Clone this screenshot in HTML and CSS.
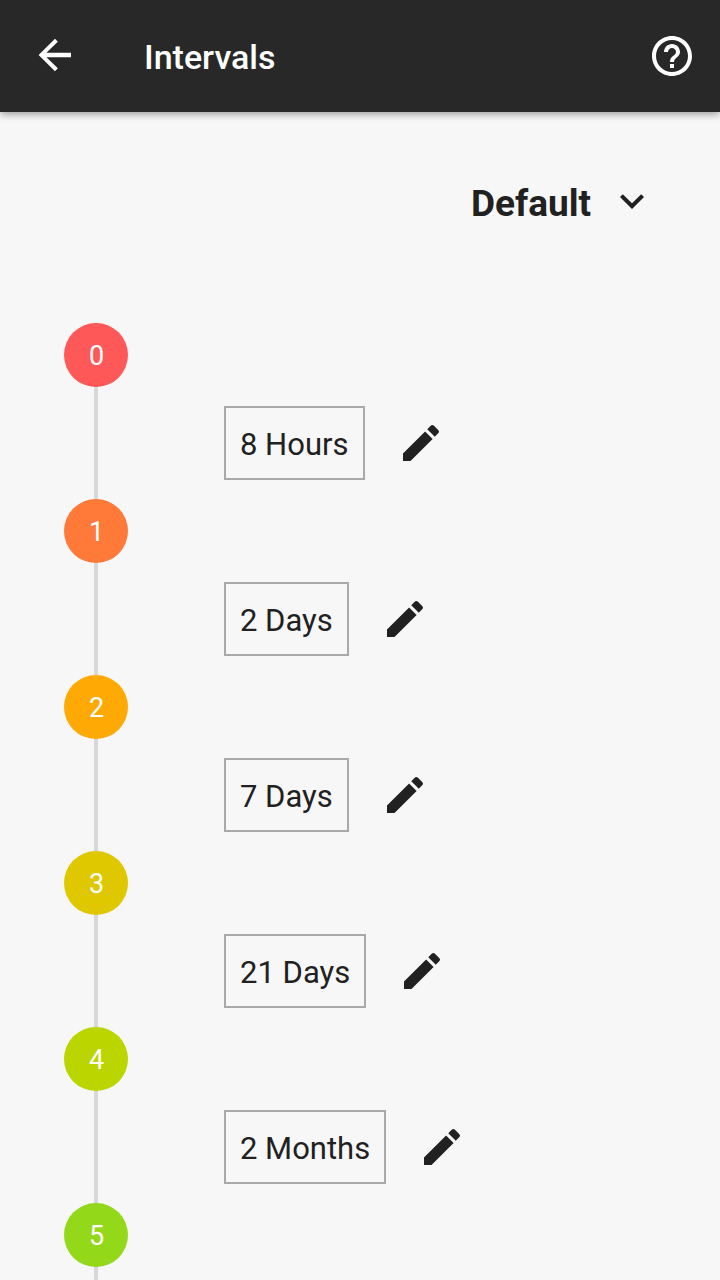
FILE: index.html
```html
<!DOCTYPE html>
<html lang="en">
<head>
<meta charset="utf-8">
<title>Intervals</title>
<link rel="stylesheet" href="styles.css">
</head>
<body>
<svg class="defs" width="0" height="0">
  <symbol id="edit" viewBox="0 0 24 24"><path d="M3 17.25V21h3.75L17.81 9.94l-3.75-3.75L3 17.25zM20.71 7.04a1 1 0 0 0 0-1.41l-2.34-2.34a1 1 0 0 0-1.41 0l-1.83 1.83 3.75 3.75 1.83-1.83z"/></symbol>
</svg>
<header class="bar">
  <svg class="icon back" viewBox="0 0 24 24"><path d="M20 10.9H7.700l5.720-5.490L12 3.900 3.800 12l8.200 8.100 1.420-1.510L7.700 13.100H20v-2.200z"/></svg>
  <h1 class="title">Intervals</h1>
  <svg class="icon" viewBox="0 0 24 24"><path d="M11 18h2v-2h-2v2zm1-16C6.48 2 2 6.48 2 12s4.480 10 10 10 10-4.480 10-10S17.520 2 12 2zm0 18c-4.410 0-8-3.590-8-8s3.590-8 8-8 8 3.590 8 8-3.590 8-8 8zm0-14c-2.210 0-4 1.790-4 4h2c0-1.100.9-2 2-2s2 .9 2 2c0 2-3 1.750-3 5h2c0-2.250 3-2.500 3-5 0-2.210-1.790-4-4-4z"/></svg>
</header>
<main>
  <div class="profile">
    <span class="profile-name">Default</span>
    <svg class="icon" viewBox="0 0 24 24"><path d="M7.41 8.59L12 13.170l4.590-4.580L18 10l-6 6-6-6 1.410-1.410z"/></svg>
  </div>
  <div class="timeline">
    <section class="step"><div class="rail"><span class="dot c0">0</span></div><div class="entry"><span class="value">8 Hours</span><svg class="icon"><use href="#edit"/></svg></div></section>
    <section class="step"><div class="rail"><span class="dot c1">1</span></div><div class="entry"><span class="value">2 Days</span><svg class="icon"><use href="#edit"/></svg></div></section>
    <section class="step"><div class="rail"><span class="dot c2">2</span></div><div class="entry"><span class="value">7 Days</span><svg class="icon"><use href="#edit"/></svg></div></section>
    <section class="step"><div class="rail"><span class="dot c3">3</span></div><div class="entry"><span class="value">21 Days</span><svg class="icon"><use href="#edit"/></svg></div></section>
    <section class="step"><div class="rail"><span class="dot c4">4</span></div><div class="entry"><span class="value">2 Months</span><svg class="icon"><use href="#edit"/></svg></div></section>
    <section class="step"><div class="rail"><span class="dot c5">5</span></div></section>
  </div>
</main>
</body>
</html>
```

FILE: styles.css
```css
* { box-sizing: border-box; }
body {
  margin: 0;
  height: 1280px;
  overflow: hidden;
  background: #f7f7f7;
  color: #212121;
  font-family: Roboto, sans-serif;
}
.defs { display: block; }
.icon { width: 48px; height: 48px; flex: none; fill: currentColor; }
.bar {
  display: flex;
  align-items: center;
  height: 112px;
  padding: 0 24px 0 31px;
  background: #282828;
  color: #fff;
  box-shadow: 0 2px 8px rgba(0, 0, 0, 0.4);
}
.back { margin-bottom: 2px; }
.title {
  flex: 1;
  margin: 2px 0 0 65px;
  font-size: 34px;
  font-weight: 500;
  line-height: 40px;
}
.profile {
  display: flex;
  justify-content: flex-end;
  align-items: center;
  height: 48px;
  margin-top: 65px;
  padding-right: 64px;
}
.profile-name {
  margin: 5px 17px 0 0;
  font-size: 37px;
  font-weight: 700;
  line-height: 42px;
}
.timeline { margin-top: 98px; padding-left: 64px; }
.step { display: flex; height: 176px; }
.step:last-child { height: 77px; }
.rail {
  width: 64px;
  margin-right: 96px;
  background: linear-gradient(#d8d8d8, #d8d8d8) center / 4px 100% no-repeat;
}
.step:first-child .rail { background-position: center 32px; }
.dot {
  display: block;
  height: 64px;
  border-radius: 50%;
  padding-left: 1px;
  color: #fff;
  font-size: 27px;
  line-height: 66px;
  text-align: center;
}
.c0 { background: #ff5858; }
.c1 { background: #ff7939; }
.c2 { background: #ffa904; }
.c3 { background: #dfc800; }
.c4 { background: #bad500; }
.c5 { background: #94d81a; }
.entry { display: flex; align-items: center; gap: 32px; height: 74px; margin-top: 83px; }
.value {
  height: 74px;
  padding: 0 14px;
  border: 2px solid #a9a9a9;
  font-size: 31px;
  line-height: 73px;
  white-space: nowrap;
}
```
